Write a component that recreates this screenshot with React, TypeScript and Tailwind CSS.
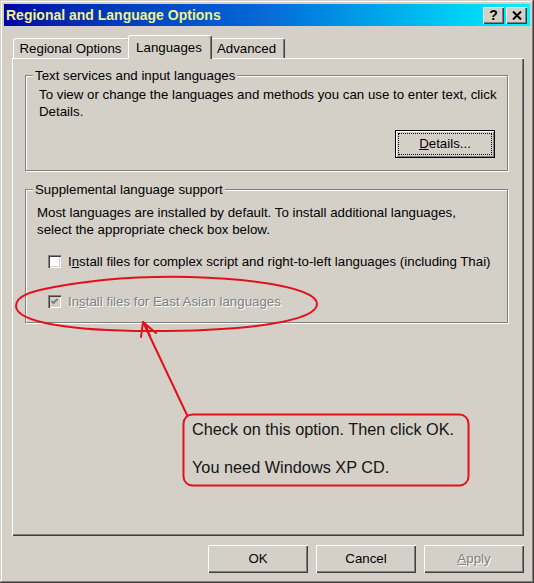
import React from "react";

/*
 * Classic Windows dialog: Regional and Language Options, Languages tab,
 * with a red hand-drawn annotation (ellipse, arrow, callout) on top.
 */

const raised =
  "bg-[#d4d0c8] shadow-[inset_1px_1px_0_#fff,inset_-1px_-1px_0_#404040,inset_-2px_-2px_0_#808080]";

function Group({ label, className, children }: { label: string; className: string; children: React.ReactNode }) {
  return (
    <div className={`relative w-[483px] border border-[#808080] shadow-[inset_1px_1px_0_#fff,1px_1px_0_#fff] ${className}`}>
      {/* legend sits on the etched line */}
      <span className="absolute -top-[8px] left-[7px] bg-[#d4d0c8] px-[2px] leading-[15px] whitespace-nowrap">{label}</span>
      {children}
    </div>
  );
}

function Check({ checked, disabled }: { checked?: boolean; disabled?: boolean }) {
  return (
    <span
      className={`relative inline-block h-[13px] w-[13px] shrink-0 shadow-[inset_1px_1px_0_#808080,inset_2px_2px_0_#404040,inset_-1px_-1px_0_#fff,inset_-2px_-2px_0_#d4d0c8] ${
        disabled ? "bg-[#d4d0c8]" : "bg-white"
      }`}
    >
      {checked && (
        <svg className="absolute inset-0" width="13" height="13" viewBox="0 0 13 13">
          <polyline points="3.5,6 5.5,8 9.5,4" fill="none" stroke={disabled ? "#808080" : "#000"} strokeWidth="2" />
        </svg>
      )}
    </span>
  );
}

function Tab({ label, active, className }: { label: string; active?: boolean; className: string }) {
  return (
    <div
      className={`flex items-center justify-center pr-[2px] rounded-t-[3px] border-t border-l border-white border-r border-r-[#404040] bg-[#d4d0c8] shadow-[inset_-1px_0_0_#808080] whitespace-nowrap ${
        active ? "relative z-10 -mb-px h-[24px]" : "h-[20px] pt-[1px]"
      } ${className}`}
    >
      {label}
    </div>
  );
}

export default function App() {
  return (
    <div className="relative h-[583px] w-[534px] overflow-hidden bg-[#d4d0c8] p-[4px] font-['Liberation_Sans',Arial,sans-serif] text-[13.3px] text-black shadow-[inset_-1px_-1px_0_#404040,inset_1px_1px_0_#d4d0c8,inset_-2px_-2px_0_#808080,inset_2px_2px_0_#fff]">
      {/* Title bar */}
      <div className="flex h-[22px] items-center bg-linear-to-r from-[#0000a8] via-[#0a6ad8] to-[#00f4ff] pl-[2px] pr-[3px]">
        <span className="text-[14px] font-bold leading-none text-[#f2f28a]">Regional and Language Options</span>
        <div className="ml-auto flex gap-[2px]">
          <div className={`flex h-[17px] w-[21px] items-center justify-center text-[14px] font-bold leading-none ${raised}`}>?</div>
          <div className={`flex h-[17px] w-[21px] items-center justify-center ${raised}`}>
            <svg width="10" height="9" viewBox="0 0 10 9">
              <path d="M1 0.5L9 8.5M9 0.5L1 8.5" stroke="#000" strokeWidth="2" />
            </svg>
          </div>
        </div>
      </div>

      {/* Tabs */}
      <div className="mt-[9px] flex h-[23px] items-end pl-[9px]">
        <Tab label="Regional Options" className="w-[117px]" />
        <Tab label="Languages" active className="-mx-[2px] w-[84px]" />
        <Tab label="Advanced" className="w-[75px]" />
      </div>

      {/* Tab page */}
      <div className={`ml-[8px] mr-[6px] h-[478px] px-[13px] pt-[17px] ${raised}`}>
        <Group label="Text services and input languages" className="h-[96px]">
          <div className="pl-[13px] pt-[10px] leading-[17px] whitespace-nowrap">
            <div>To view or change the languages and methods you can use to enter text, click</div>
            <div>Details.</div>
          </div>
          <div className="mt-[10px] flex justify-end pr-[12px]">
            <button
              type="button"
              className="relative h-[28px] w-[100px] border border-black bg-[#d4d0c8] shadow-[inset_1px_1px_0_#fff,inset_-1px_-1px_0_#808080]"
            >
              <span className="absolute inset-[2px] border border-dotted border-black" />
              <span className="relative">
                <u>D</u>etails...
              </span>
            </button>
          </div>
        </Group>

        <Group label="Supplemental language support" className="mt-[18px] h-[134px]">
          <div className="pl-[11px] pt-[14px] leading-[17px] whitespace-nowrap">
            <div>Most languages are installed by default. To install additional languages,</div>
            <div>select the appropriate check box below.</div>
            <div className="mt-[15px] flex h-[17px] items-center gap-[7px] pl-[11px]">
              <Check />
              <span>
                I<u>n</u>stall files for complex script and right-to-left languages (including Thai)
              </span>
            </div>
            <div className="mt-[23px] flex h-[17px] items-center gap-[7px] pl-[11px]">
              <Check checked disabled />
              <span className="text-[#808080] [text-shadow:1px_1px_0_#fff]">
                In<u>s</u>tall files for East Asian languages
              </span>
            </div>
          </div>
        </Group>
      </div>

      {/* Dialog buttons */}
      <div className="mt-[9px] flex justify-end gap-[8px] pr-[6px]">
        <button type="button" className={`h-[28px] w-[100px] ${raised}`}>OK</button>
        <button type="button" className={`h-[28px] w-[100px] ${raised}`}>Cancel</button>
        <button type="button" className={`h-[28px] w-[100px] text-[#808080] [text-shadow:1px_1px_0_#fff] ${raised}`}>
          <u>A</u>pply
        </button>
      </div>

      {/* Red annotation drawn over the dialog */}
      <svg className="pointer-events-none absolute inset-0" width="534" height="583" viewBox="0 0 534 583">
        <g fill="none" stroke="#e3101c" strokeWidth="2" strokeLinecap="round">
          <path d="M40 290 C90 279 140 276 190 277 C265 279 317 290 317 304 C317 320 255 331 150 331 C70 331 16 322 16 306 C16 296 30 291 60 286" />
          <path d="M187 415 L143 322" />
          <path d="M143 322 L141 337 M143 322 L156 333 M145 323 L150 336" />
          <rect x="183.5" y="414.5" width="285" height="71" rx="9" />
        </g>
      </svg>
      <div className="pointer-events-none absolute left-[192px] top-[420px] whitespace-nowrap text-[16.3px] leading-[19px] text-[#141414]">
        <div>Check on this option. Then click OK.</div>
        <div className="mt-[19px]">You need Windows XP CD.</div>
      </div>
    </div>
  );
}
